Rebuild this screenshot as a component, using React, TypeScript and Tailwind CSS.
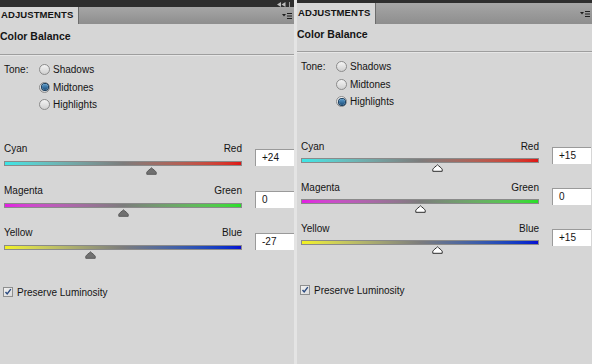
import React from "react";

type Slider = { left: string; right: string; value: number; from: string; to: string };

type PanelProps = {
  tone: "Shadows" | "Midtones" | "Highlights";
  sliders: Slider[];
  filledThumb: boolean;
  darkH: string;
  tabH: string;
  titleMt: string;
  dividerMt: string;
  slidersMt: string;
  barMt: string;
  preserveMt: string;
  collapse?: boolean;
  className?: string;
};

const font = { fontFamily: '"Liberation Sans", Arial, sans-serif' };

const Radio = ({ checked }: { checked: boolean }) => (
  <span className="flex h-[11px] w-[11px] items-center justify-center rounded-full border border-[#8c8c8c] bg-gradient-to-b from-[#f4f4f4] to-[#d0d0d0]">
    {checked && (
      <span className="h-[6px] w-[6px] rounded-full bg-gradient-to-b from-[#5a9ccc] to-[#1d4f7c] ring-1 ring-[#143a5c]" />
    )}
  </span>
);

const Thumb = ({ filled }: { filled: boolean }) => (
  <svg width="11" height="8" viewBox="0 0 11 8">
    <path
      d="M5.5 0.8 C6.5 1.8 9.8 4.2 10.2 5.2 L10.2 7.3 L0.8 7.3 L0.8 5.2 C1.2 4.2 4.5 1.8 5.5 0.8 Z"
      fill={filled ? "#707070" : "#ffffff"}
      stroke={filled ? "#5c5c5c" : "#2e2e2e"}
      strokeWidth="1"
    />
  </svg>
);

const Panel = (p: PanelProps) => {
  return (
    <div className={`flex flex-col bg-[#d6d6d6] text-[#141414] ${p.className ?? ""}`}>
      <div className={`flex items-end justify-end gap-[3px] overflow-hidden bg-[#2e2e2e] pr-[4px] ${p.darkH}`}>
        {p.collapse && (
          <>
            <svg width="9" height="5" viewBox="0 0 9 5">
              <path d="M4 0 L0 2.5 L4 5 Z M8.5 0 L4.5 2.5 L8.5 5 Z" fill="#bdbdbd" />
            </svg>
            <span className="h-[5px] w-px bg-[#9a9a9a]" />
          </>
        )}
      </div>
      <div className={`flex items-stretch bg-gradient-to-b from-[#a6a6a6] to-[#8e8e8e] ${p.tabH}`}>
        <div className="flex w-[79px] items-center border-r border-[#6c6c6c] bg-[#d6d6d6] pl-[1px] text-[9.5px] font-bold tracking-[0.1px]">
          ADJUSTMENTS
        </div>
        <div className="flex flex-1 items-center justify-end pr-[2px]">
          <svg width="10" height="8" viewBox="0 0 10 8">
            <path d="M0 2 L4 2 L2 4.5 Z" fill="#1e1e1e" />
            <rect x="5" y="1" width="5" height="1" fill="#1e1e1e" />
            <rect x="5" y="3.5" width="5" height="1" fill="#1e1e1e" />
            <rect x="5" y="6" width="5" height="1" fill="#1e1e1e" />
          </svg>
        </div>
      </div>

      <div className={`h-[16px] text-[10.5px] font-bold leading-[16px] ${p.titleMt}`}>Color Balance</div>
      <div className={`h-px bg-[#9e9e9e] ${p.dividerMt}`} />
      <div className="h-px bg-[#e6e6e6]" />

      <div className="mt-[5px] flex pl-[4px] text-[10px]">
        <div className="w-[35px] leading-[17px]">Tone:</div>
        <div className="flex flex-col">
          {(["Shadows", "Midtones", "Highlights"] as const).map((t) => (
            <div key={t} className="flex h-[17.5px] items-center gap-[3px]">
              <Radio checked={p.tone === t} />
              <span>{t}</span>
            </div>
          ))}
        </div>
      </div>

      <div className={`flex flex-col gap-[9px] pl-[4px] ${p.slidersMt}`}>
        {p.sliders.map((s) => (
          <div key={s.left} className="flex items-start">
            <div className="w-[238px]">
              <div className="flex h-[14px] items-center justify-between text-[10px]">
                <span>{s.left}</span>
                <span>{s.right}</span>
              </div>
              <div
                className={`h-[5px] border border-[#8a8a8a] ${p.barMt} ${s.from} via-[#7c7c7c] ${s.to} bg-gradient-to-r`}
              />
              <div className="relative mt-[1px] h-[8px]">
                <div className="absolute top-0 -ml-[5.5px]" style={{ left: `${50 + s.value / 2}%` }}>
                  <Thumb filled={p.filledThumb} />
                </div>
              </div>
            </div>
            <div className="ml-[13px] mt-[7px] flex h-[17px] w-[39px] items-center border-l border-t border-[#9a9a9a] bg-white pl-[6px] text-[10px]">
              {s.value > 0 ? `+${s.value}` : `${s.value}`}
            </div>
          </div>
        ))}
      </div>

      <div className={`flex items-center gap-[4px] pl-[3px] text-[10px] ${p.preserveMt}`}>
        <span className="flex h-[10px] w-[10px] items-center justify-center border border-[#8e8f8f] bg-gradient-to-br from-[#f0f0f0] to-[#dcdcdc]">
          <svg width="8" height="8" viewBox="0 0 8 8">
            <path d="M1.5 4 L3.2 6 L6.8 1.2" fill="none" stroke="#2a4a80" strokeWidth="1.4" />
          </svg>
        </span>
        <span>Preserve Luminosity</span>
      </div>
    </div>
  );
};

const cmy = (a: number, b: number, c: number): Slider[] => [
  { left: "Cyan", right: "Red", value: a, from: "from-[#3ae6e6]", to: "to-[#e01414]" },
  { left: "Magenta", right: "Green", value: b, from: "from-[#e21ce2]", to: "to-[#26e026]" },
  { left: "Yellow", right: "Blue", value: c, from: "from-[#f2f21a]", to: "to-[#0a0ad2]" },
];

export default function App() {
  return (
    <div className="flex h-[364px] w-[592px] overflow-hidden bg-[#d6d6d6]" style={font}>
      <Panel
        className="w-[294px]"
        tone="Midtones"
        sliders={cmy(24, 0, -27)}
        filledThumb
        collapse
        darkH="h-[7px]"
        tabH="h-[17px]"
        titleMt="mt-[4px]"
        dividerMt="mt-[10px]"
        slidersMt="mt-[28px]"
        barMt="mt-[5px]"
        preserveMt="mt-[26px]"
      />
      <div className="w-[3px] bg-[#e4e4e4]" />
      <Panel
        className="flex-1"
        tone="Highlights"
        sliders={cmy(15, 0, 15)}
        filledThumb={false}
        darkH="h-[3px]"
        tabH="h-[21px]"
        titleMt="mt-[2px]"
        dividerMt="mt-[9px]"
        slidersMt="mt-[29px]"
        barMt="mt-[4px]"
        preserveMt="mt-[29px]"
      />
    </div>
  );
}
